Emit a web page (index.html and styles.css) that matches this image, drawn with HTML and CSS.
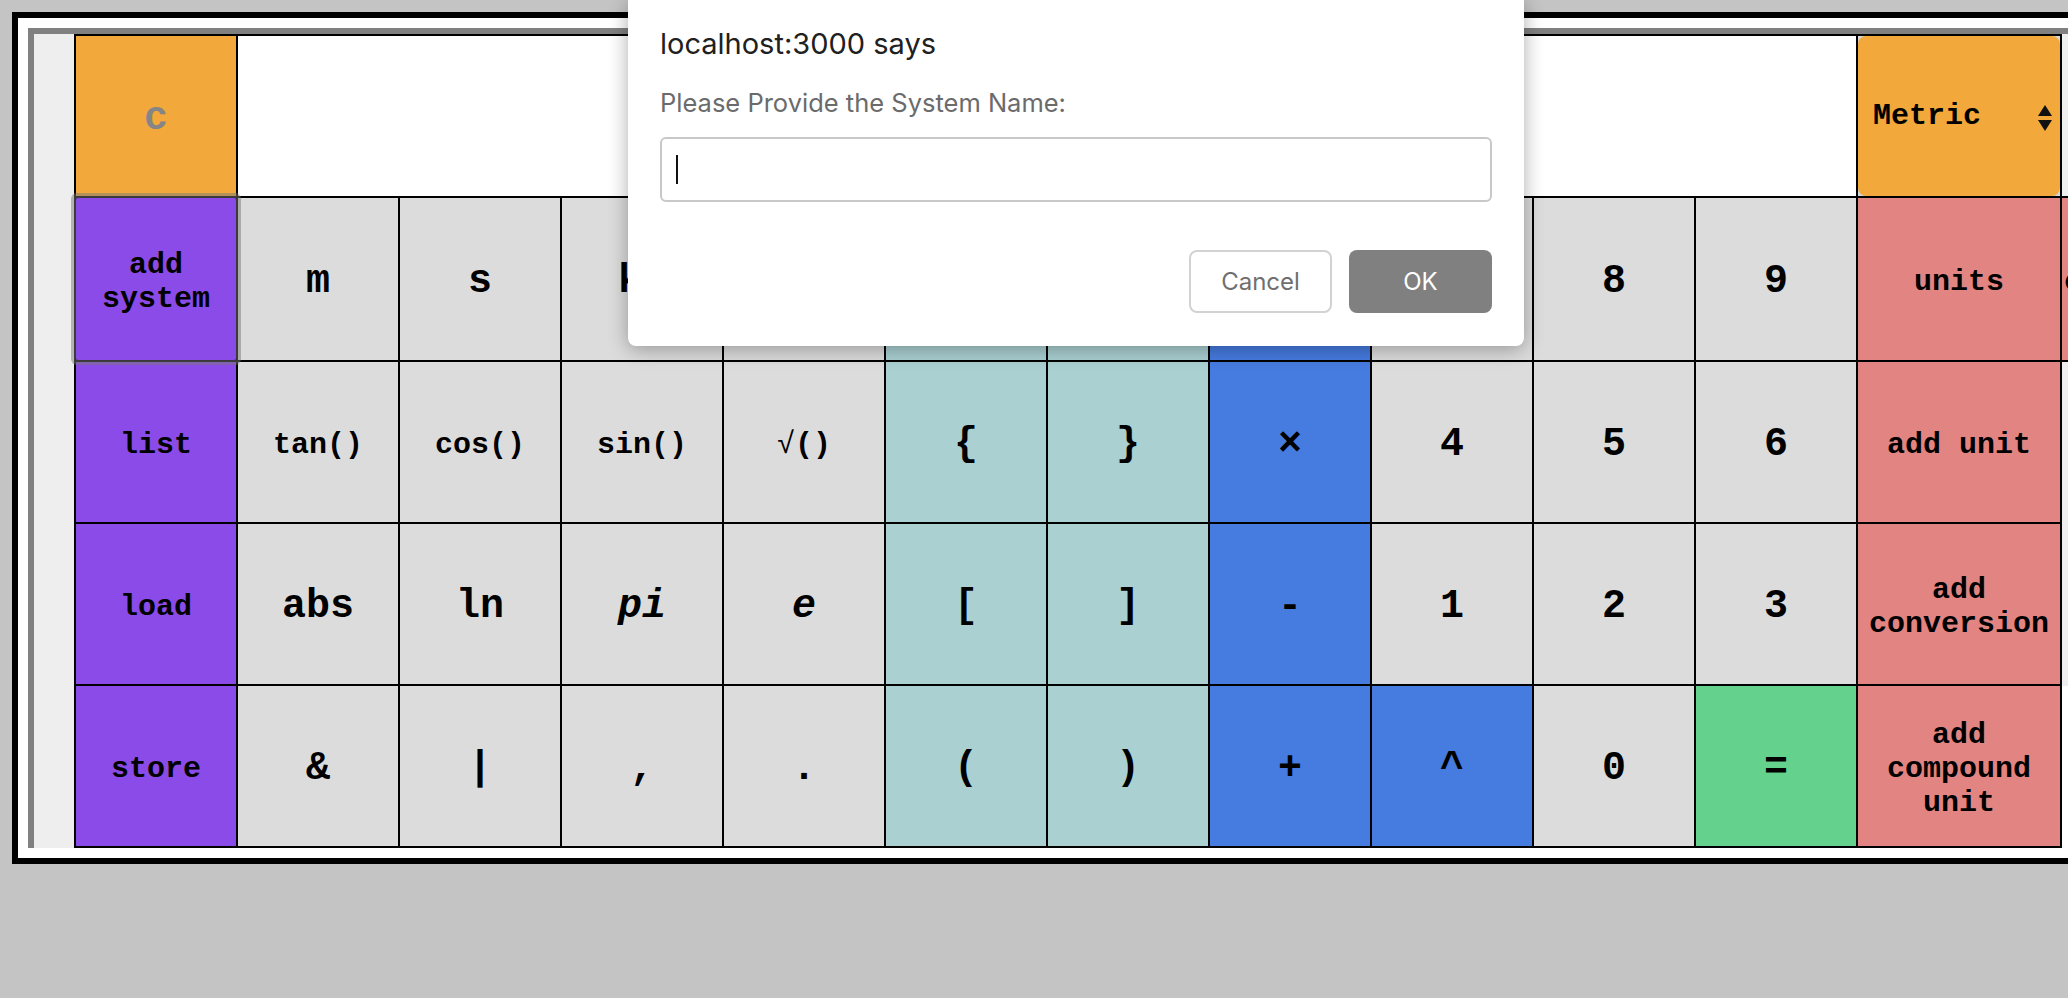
FILE: index.html
```html
<!DOCTYPE html>
<html lang="en">
<head>
<meta charset="utf-8">
<title>Unit Calculator</title>
<link rel="stylesheet" href="styles.css">
</head>
<body>
<div class="frame">
  <div class="panel">
    <div class="keys">
      <button class="key orange clear">c</button>
      <div class="display"></div>
      <div class="system-cell">
        <div class="select">
          <span>Metric</span>
          <svg class="arrows" width="14" height="27" viewBox="0 0 14 27"><polygon points="7,0 14,11 0,11" fill="#111"/><polygon points="0,15 14,15 7,26" fill="#111"/></svg>
        </div>
      </div>

      <button class="key purple small focus">add system</button>
      <button class="key gray">m</button>
      <button class="key gray">s</button>
      <button class="key gray">kg</button>
      <button class="key gray">K</button>
      <button class="key teal">&lt;</button>
      <button class="key teal">&gt;</button>
      <button class="key blue">÷</button>
      <button class="key gray">7</button>
      <button class="key gray">8</button>
      <button class="key gray">9</button>
      <button class="key red small">units</button>

      <button class="key purple small">list</button>
      <button class="key gray small">tan()</button>
      <button class="key gray small">cos()</button>
      <button class="key gray small">sin()</button>
      <button class="key gray small"><span class="root">√</span>()</button>
      <button class="key teal">{</button>
      <button class="key teal">}</button>
      <button class="key blue">×</button>
      <button class="key gray">4</button>
      <button class="key gray">5</button>
      <button class="key gray">6</button>
      <button class="key red small">add unit</button>

      <button class="key purple small">load</button>
      <button class="key gray">abs</button>
      <button class="key gray">ln</button>
      <button class="key gray italic">pi</button>
      <button class="key gray italic">e</button>
      <button class="key teal">[</button>
      <button class="key teal">]</button>
      <button class="key blue">-</button>
      <button class="key gray">1</button>
      <button class="key gray">2</button>
      <button class="key gray">3</button>
      <button class="key red small">add conversion</button>

      <button class="key purple small">store</button>
      <button class="key gray">&amp;</button>
      <button class="key gray">|</button>
      <button class="key gray">,</button>
      <button class="key gray">.</button>
      <button class="key teal">(</button>
      <button class="key teal">)</button>
      <button class="key blue">+</button>
      <button class="key blue">^</button>
      <button class="key gray">0</button>
      <button class="key green">=</button>
      <button class="key red small">add compound unit</button>
    </div>
    <div class="extra">
      <div class="extra-top"></div>
      <button class="key red small extra-key">conversions</button>
      <div class="extra-mid"></div>
      <div class="extra-low"></div>
    </div>
  </div>
</div>

<div class="dialog">
  <div class="dialog-title">localhost:3000 says</div>
  <div class="dialog-message">Please Provide the System Name:</div>
  <div class="dialog-input"><span class="caret"></span></div>
  <div class="dialog-actions">
    <button class="dlg-btn cancel">Cancel</button>
    <button class="dlg-btn ok">OK</button>
  </div>
</div>
</body>
</html>
```

FILE: styles.css
```css
html, body {
  margin: 0;
  padding: 0;
  overflow: hidden;
}

body {
  background: #c4c4c4;
  width: 2068px;
  height: 998px;
  position: relative;
}

.frame {
  margin: 12px 0 0 12px;
  border: 6px solid #000;
  background: #fff;
  padding: 10px 0 10px 10px;
  width: max-content;
}

.panel {
  display: flex;
  border-top: 6px solid #808080;
  border-left: 6px solid #808080;
  background: #eeeeee;
  padding-left: 40px;
}

.keys {
  display: grid;
  grid-template-columns: repeat(11, 160px) 202px;
  grid-template-rows: 160px 162px 160px 160px 160px;
  gap: 2px;
  padding: 2px;
  background: #000;
}

.key {
  margin: 0;
  border: 0;
  padding: 5px 2px 0 2px;
  font-family: "Liberation Mono", "Courier New", monospace;
  font-weight: bold;
  font-size: 40px;
  line-height: normal;
  color: #000;
  text-align: center;
  cursor: pointer;
}

.key.small { font-size: 30px; }
.key.italic { font-style: italic; }
.root { font-weight: normal; }

.orange { background: #f2a83b; }
.purple { background: #8a4be8; }
.gray { background: #dcdcdc; }
.teal { background: #aad0d2; }
.blue { background: #467be0; }
.green { background: #64d18d; }
.red { background: #e28582; }

.clear { color: #858585; }

.focus {
  position: relative;
  z-index: 2;
  box-shadow: 0 0 0 1px #3a3a3a, 0 0 0 5px rgba(120, 120, 120, 0.5);
  border-radius: 2px;
}

.display {
  grid-column: 2 / span 10;
  background: #fff;
}

.system-cell {
  background: #d6dae0;
}

.select {
  height: 100%;
  box-sizing: border-box;
  border-radius: 8px;
  background: #f2a83b;
  display: flex;
  align-items: center;
  justify-content: space-between;
  padding: 0 8px 0 15px;
  font-family: "Liberation Mono", "Courier New", monospace;
  font-weight: bold;
  font-size: 30px;
  color: #000;
}

.arrows { display: block; margin-top: 4px; }

.extra {
  display: flex;
  flex-direction: column;
  width: 200px;
}

.extra-top { height: 162px; }

.extra-key {
  height: 166px;
  border-top: 2px solid #000;
  border-bottom: 2px solid #000;
  text-align: left;
  padding-left: 2px;
}

.extra-mid { height: 324px; }
.extra-low { flex: 1; background: #fff; }

/* prompt dialog */
.dialog {
  position: absolute;
  left: 628px;
  top: 0;
  width: 896px;
  box-sizing: border-box;
  background: #fff;
  border-radius: 0 0 8px 8px;
  box-shadow: 0 3px 20px rgba(0, 0, 0, 0.33);
  padding: 26px 32px 33px 32px;
  font-family: Inter, "Liberation Sans", sans-serif;
}

.dialog-title {
  font-size: 29px;
  line-height: 35px;
  color: #202020;
}

.dialog-message {
  margin-top: 27px;
  font-size: 25.5px;
  line-height: 30px;
  color: #6b6b6b;
}

.dialog-input {
  margin-top: 19px;
  height: 65px;
  box-sizing: border-box;
  border: 2px solid #c8c8c8;
  border-radius: 6px;
  display: flex;
  align-items: center;
  padding-left: 14px;
}

.caret {
  display: block;
  width: 2px;
  height: 29px;
  background: #111;
}

.dialog-actions {
  margin-top: 48px;
  display: flex;
  justify-content: flex-end;
  gap: 17px;
}

.dlg-btn {
  width: 143px;
  height: 63px;
  box-sizing: border-box;
  border-radius: 8px;
  font-family: Inter, "Liberation Sans", sans-serif;
  font-size: 24px;
  margin: 0;
  padding: 0;
}

.cancel {
  background: #fff;
  border: 2px solid #d2d2d2;
  color: #6f6f6f;
}

.ok {
  background: #808080;
  border: 0;
  color: #fff;
}
```
